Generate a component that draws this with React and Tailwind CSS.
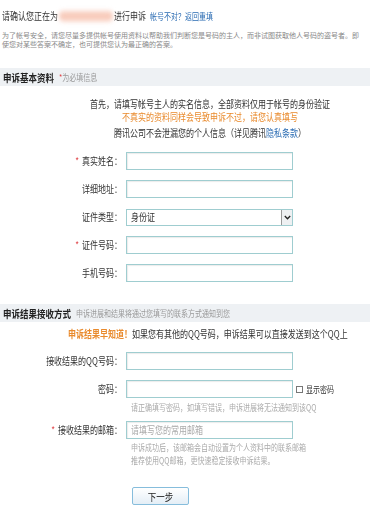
const FONT = { fontFamily: '"Noto Sans CJK SC", "Liberation Sans", sans-serif' }

function Label({ text, required }) {
  return (
    <div className="w-[122px] shrink-0 text-right text-[8px] leading-[18px] text-[#333] scale-y-125">
      {required && <span className="text-[#e0464a] mr-[3px]">*</span>}
      {text}：
    </div>
  )
}

function Input({ placeholder }) {
  return (
    <div className="ml-[4px] w-[167px] h-[18px] border border-[#9fcdd0] bg-white shadow-[inset_1px_1px_1px_rgba(0,0,0,0.08)] px-[4px]">
      {placeholder && <div className="text-[8px] leading-[16px] text-[#aaa] scale-y-125 origin-left">{placeholder}</div>}
    </div>
  )
}

function SectionBar({ title, children }) {
  return (
    <div className="w-[370px] h-[18px] bg-[#eef1f4] flex items-center pl-[3px]">
      <span className="text-[8.5px] font-bold text-[#222] scale-y-125">{title}</span>
      <span className="ml-[5px] text-[7px] text-[#999] scale-y-125">{children}</span>
    </div>
  )
}

export default function App() {
  return (
    <div className="w-[376px] h-[526px] bg-white overflow-hidden" style={FONT}>
      {/* title */}
      <div className="pt-[9px] pl-[2px] flex items-center text-[8px] leading-[12px] text-[#333] scale-y-125 origin-left">
        <span>请确认您正在为</span>
        <span className="inline-block w-[54px] h-[8px] ml-[1px] bg-[#f8cbbb] blur-[2px] rounded" />
        <span className="ml-[1px]">进行申诉</span>
        <span className="ml-[4px] text-[7px] text-[#2b6cb3]">帐号不对？</span>
        <span className="text-[7px] text-[#2b6cb3]">返回重填</span>
      </div>
      <p className="mt-[10px] pl-[2px] w-[362px] text-[7px] leading-[9px] text-[#888]">
        为了帐号安全，请您尽量多提供帐号使用资料以帮助我们判断您是号码的主人，而非试图获取他人号码的盗号者。即使您对某些答案不确定，也可提供您认为最正确的答案。
      </p>

      <div className="mt-[19px]">
        <SectionBar title="申诉基本资料">
          <span className="text-[#e0464a]">*</span>为必填信息
        </SectionBar>
      </div>

      <div className="w-[420px] text-center text-[8px] leading-[12px]">
        <div className="mt-[12px] text-[#333] scale-y-125">首先，请填写帐号主人的实名信息，全部资料仅用于帐号的身份验证</div>
        <div className="mt-[1px] text-[#e98a2c] scale-y-125">不真实的资料同样会导致申诉不过，请您认真填写</div>
        <div className="mt-[4px] text-[#333] scale-y-125">
          腾讯公司不会泄漏您的个人信息（详见腾讯<span className="text-[#2b6cb3]">隐私条款</span>）
        </div>
      </div>

      <div className="mt-[13px] flex flex-col gap-[10px]">
        <div className="flex items-center">
          <Label text="真实姓名" required />
          <Input />
        </div>
        <div className="flex items-center">
          <Label text="详细地址" />
          <Input />
        </div>
        <div className="flex items-center">
          <Label text="证件类型" />
          <div className="ml-[4px] w-[167px] h-[17px] border border-[#9fcdd0] bg-white flex items-center">
            <span className="flex-1 pl-[4px] text-[8px] text-[#333] scale-y-125 origin-left">身份证</span>
            <span className="w-[11px] h-[15px] border-l border-[#999] bg-[#eef0f2] flex items-center justify-center">
              <svg width="7" height="5" viewBox="0 0 7 5">
                <path d="M0.8 1 L3.5 3.8 L6.2 1" fill="none" stroke="#222" strokeWidth="1.3" />
              </svg>
            </span>
          </div>
        </div>
        <div className="flex items-center">
          <Label text="证件号码" required />
          <Input />
        </div>
        <div className="flex items-center">
          <Label text="手机号码" />
          <Input />
        </div>
      </div>

      <div className="mt-[22px]">
        <SectionBar title="申诉结果接收方式">申诉进展和结果将通过您填写的联系方式通知到您</SectionBar>
      </div>

      <div className="mt-[6px] pl-[68px] text-[8px] leading-[12px] text-[#333] whitespace-nowrap scale-y-125 origin-left">
        <span className="text-[#e98a2c] font-bold">申诉结果早知道！</span>如果您有其他的QQ号码，申诉结果可以直接发送到这个QQ上
      </div>

      <div className="mt-[12px] flex items-center">
        <Label text="接收结果的QQ号码" />
        <Input />
      </div>
      <div className="mt-[10px] flex items-center">
        <Label text="密码" />
        <Input />
        <span className="ml-[3px] w-[7px] h-[7px] border border-[#777] bg-white" />
        <span className="ml-[3px] text-[7px] text-[#333] scale-y-125">显示密码</span>
      </div>
      <div className="mt-[4px] pl-[131px] text-[7px] leading-[10px] text-[#aaa] scale-y-125 origin-left">
        请正确填写密码，如填写错误，申诉进展将无法通知到该QQ
      </div>
      <div className="mt-[9px] flex items-center">
        <Label text="接收结果的邮箱" required />
        <Input placeholder="请填写您的常用邮箱" />
      </div>
      <div className="mt-[2px] pl-[131px] text-[7px] leading-[13px] text-[#aaa]">
        <div className="scale-y-125 origin-left">申诉成功后，该邮箱会自动设置为个人资料中的联系邮箱</div>
        <div className="scale-y-125 origin-left">推荐使用QQ邮箱，更快速稳定接收申诉结果。</div>
      </div>
      <div className="mt-[14px] pl-[132px]">
        <button className="w-[57px] h-[18px] border border-[#86bddc] rounded-[2px] bg-gradient-to-b from-white to-[#e4eef6] text-[8.5px] leading-[16px] text-[#222]">
          <span className="inline-block scale-y-125">下一步</span>
        </button>
      </div>
    </div>
  )
}
